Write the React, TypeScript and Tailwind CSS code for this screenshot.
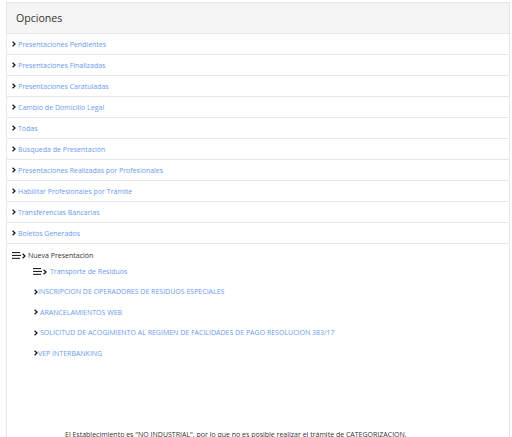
import React from 'react';

const opciones = [
  'Presentaciones Pendientes',
  'Presentaciones Finalizadas',
  'Presentaciones Caratuladas',
  'Cambio de Domicilio Legal',
  'Todas',
  'Búsqueda de Presentación',
  'Presentaciones Realizadas por Profesionales',
  'Habilitar Profesionales por Trámite',
  'Transferencias Bancarias',
  'Boletos Generados',
];

const tramites = [
  { label: 'INSCRIPCION DE OPERADORES DE RESIDUOS ESPECIALES', gap: false },
  { label: 'ARANCELAMIENTOS WEB', gap: true },
  { label: 'SOLICITUD DE ACOGIMIENTO AL REGIMEN DE FACILIDADES DE PAGO RESOLUCION 383/17', gap: true },
  { label: 'VEP INTERBANKING', gap: false },
];

function Chevron() {
  return (
    <svg width="4" height="6" viewBox="0 0 4 6" className="shrink-0">
      <path d="M0.6 0.8 L3 3 L0.6 5.2" fill="none" stroke="#111" strokeWidth="1.2" />
    </svg>
  );
}

function Bars() {
  return (
    <svg width="9" height="7" viewBox="0 0 9 7" className="shrink-0">
      <rect x="0" y="0" width="8" height="1.1" fill="#222" />
      <rect x="0" y="2.9" width="9" height="1.1" fill="#222" />
      <rect x="0" y="5.8" width="8" height="1.1" fill="#222" />
    </svg>
  );
}

export default function App() {
  return (
    <div className="min-h-[437px] bg-white pt-[2px] pl-[6px] pr-[2px]" style={{ fontFamily: '"Open Sans", "Noto Sans", sans-serif' }}>
      <div className="border border-[#e6e6e6] border-b-0 min-h-[435px]">
        <div className="h-[31px] bg-[#f5f5f5] border-b border-[#e6e6e6] flex items-center pl-[9px]">
          <h2 className="text-[10.6px] text-[#333] leading-none">Opciones</h2>
        </div>
        {opciones.map((o) => (
          <div key={o} className="h-[21px] border-b border-[#e8e8e8] flex items-center pl-[5px] gap-[2px]">
            <Chevron />
            <a className="text-[7px] text-[#6a9af2] leading-none">{o}</a>
          </div>
        ))}
        <div className="pt-[7px] pl-[5px]">
          <div className="flex items-center gap-[1px] h-[9px]">
            <Bars />
            <Chevron />
            <span className="text-[7px] text-[#333] leading-none ml-[1px]">Nueva Presentación</span>
          </div>
          <div className="pl-[21px] mt-[7px]">
            <div className="flex items-center gap-[1px] h-[9px]">
              <Bars />
              <Chevron />
              <a className="text-[7px] text-[#6a9af2] leading-none ml-[2px]">Transporte de Residuos</a>
            </div>
            <div className="flex flex-col gap-[11.5px] mt-[11px] pl-[1px]">
              {tramites.map((t) => (
                <div key={t.label} className="flex items-center h-[9px]">
                  <Chevron />
                  <a className={`text-[7px] text-[#6a9af2] leading-none ${t.gap ? 'ml-[2px]' : ''}`}>{t.label}</a>
                </div>
              ))}
            </div>
          </div>
        </div>
        <p className="mt-[73px] pl-[58px] text-[7px] text-[#333] leading-none">
          El Establecimiento es "NO INDUSTRIAL", por lo que no es posible realizar el trámite de CATEGORIZACION.
        </p>
      </div>
    </div>
  );
}
